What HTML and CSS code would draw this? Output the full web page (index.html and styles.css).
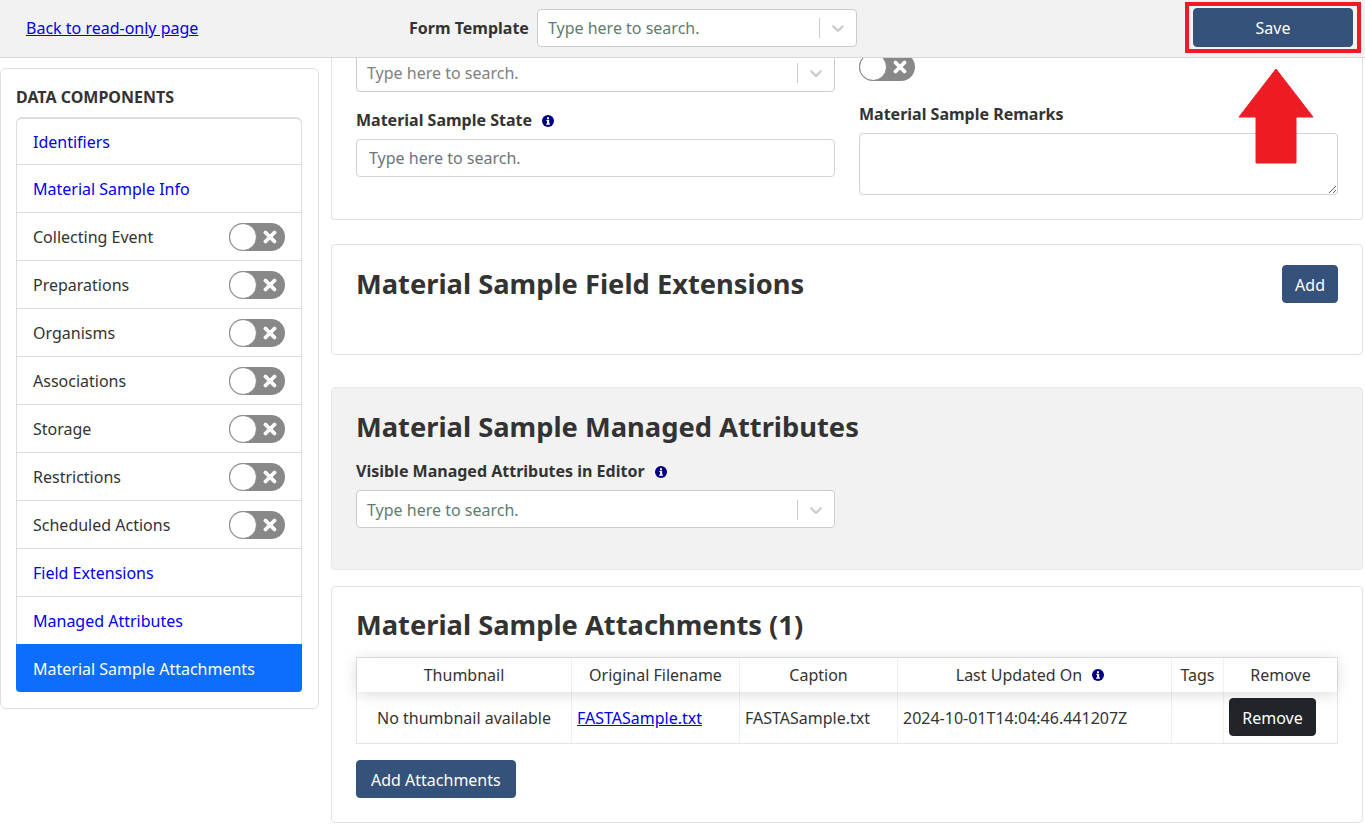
FILE: index.html
```html
<!DOCTYPE html>
<html lang="en">
<head>
    <meta charset="UTF-8">
    <meta name="viewport" content="width=device-width, initial-scale=1.0">
    <title>Edit Material Sample</title>
    <link rel="stylesheet" href="styles.css">
</head>
<body>
    <svg class="icon-defs" width="0" height="0">
        <symbol id="chevron" viewBox="0 0 20 20"><path d="M4.516 7.548c0.436-0.446 1.043-0.481 1.576 0l3.908 3.747 3.908-3.747c0.533-0.481 1.141-0.446 1.574 0 0.436 0.445 0.408 1.197 0 1.615-0.406 0.418-4.695 4.502-4.695 4.502-0.217 0.223-0.502 0.335-0.787 0.335s-0.57-0.112-0.789-0.335c0 0-4.287-4.084-4.695-4.502s-0.436-1.17 0-1.615z"/></symbol>
        <symbol id="info" viewBox="0 0 12 12"><circle cx="6" cy="6" r="6" fill="#000080"/><path fill="#fff" d="M5 2.200h2v1.700H5zM4.400 4.800h2.800v3.600h.7v1.300H4.200V8.400h.9V6.100h-.7z"/></symbol>
        <symbol id="cross" viewBox="0 0 14 14"><path d="M2.500 2.500l9 9M11.500 2.500l-9 9" stroke="#fff" stroke-width="3.800" stroke-linecap="round" fill="none"/></symbol>
    </svg>

    <header class="topbar">
        <a class="back-link" href="#">Back to read-only page</a>
        <div class="template-group">
            <label class="field-label">Form Template</label>
            <div class="select select-header">
                <span class="select-text">Type here to search.</span>
                <span class="select-sep"></span>
                <svg class="select-arrow"><use href="#chevron"/></svg>
            </div>
        </div>
        <button class="btn btn-save" type="button">Save</button>
    </header>

    <div class="layout">
        <aside class="sidebar">
            <h2 class="sidebar-title">DATA COMPONENTS</h2>
            <ul class="nav-list">
                <li class="nav-item"><a href="#">Identifiers</a></li>
                <li class="nav-item"><a href="#">Material Sample Info</a></li>
                <li class="nav-item"><span>Collecting Event</span><span class="toggle"><span class="knob"></span><svg class="cross"><use href="#cross"/></svg></span></li>
                <li class="nav-item"><span>Preparations</span><span class="toggle"><span class="knob"></span><svg class="cross"><use href="#cross"/></svg></span></li>
                <li class="nav-item"><span>Organisms</span><span class="toggle"><span class="knob"></span><svg class="cross"><use href="#cross"/></svg></span></li>
                <li class="nav-item"><span>Associations</span><span class="toggle"><span class="knob"></span><svg class="cross"><use href="#cross"/></svg></span></li>
                <li class="nav-item"><span>Storage</span><span class="toggle"><span class="knob"></span><svg class="cross"><use href="#cross"/></svg></span></li>
                <li class="nav-item"><span>Restrictions</span><span class="toggle"><span class="knob"></span><svg class="cross"><use href="#cross"/></svg></span></li>
                <li class="nav-item"><span>Scheduled Actions</span><span class="toggle"><span class="knob"></span><svg class="cross"><use href="#cross"/></svg></span></li>
                <li class="nav-item"><a href="#">Field Extensions</a></li>
                <li class="nav-item"><a href="#">Managed Attributes</a></li>
                <li class="nav-item active"><a href="#">Material Sample Attachments</a></li>
            </ul>
        </aside>

        <main class="content">
            <section class="card card-info">
                <div class="two-col">
                    <div class="col">
                        <div class="select">
                            <span class="select-text">Type here to search.</span>
                            <span class="select-sep"></span>
                            <svg class="select-arrow"><use href="#chevron"/></svg>
                        </div>
                        <label class="field-label state-label">Material Sample State <svg class="info"><use href="#info"/></svg></label>
                        <input class="text-input" type="text" placeholder="Type here to search.">
                    </div>
                    <div class="col">
                        <span class="toggle"><span class="knob"></span><svg class="cross"><use href="#cross"/></svg></span>
                        <label class="field-label remarks-label">Material Sample Remarks</label>
                        <textarea class="text-area"></textarea>
                    </div>
                </div>
            </section>

            <section class="card card-ext">
                <h3 class="card-title">Material Sample Field Extensions</h3>
                <button class="btn btn-add" type="button">Add</button>
            </section>

            <section class="card card-attrs">
                <h3 class="card-title">Material Sample Managed Attributes</h3>
                <label class="field-label attrs-label">Visible Managed Attributes in Editor <svg class="info"><use href="#info"/></svg></label>
                <div class="select select-half">
                    <span class="select-text">Type here to search.</span>
                    <span class="select-sep"></span>
                    <svg class="select-arrow"><use href="#chevron"/></svg>
                </div>
            </section>

            <section class="card card-attach">
                <h3 class="card-title">Material Sample Attachments (1)</h3>
                <div class="grid-table">
                    <div class="grid-row grid-head">
                        <div class="cell center">Thumbnail</div>
                        <div class="cell center">Original Filename</div>
                        <div class="cell center">Caption</div>
                        <div class="cell center">Last Updated On <svg class="info info-th"><use href="#info"/></svg></div>
                        <div class="cell center">Tags</div>
                        <div class="cell center">Remove</div>
                    </div>
                    <div class="grid-row grid-body">
                        <div class="cell center">No thumbnail available</div>
                        <div class="cell"><a href="#">FASTASample.txt</a></div>
                        <div class="cell">FASTASample.txt</div>
                        <div class="cell">2024-10-01T14:04:46.441207Z</div>
                        <div class="cell"></div>
                        <div class="cell"><button class="btn btn-dark" type="button">Remove</button></div>
                    </div>
                </div>
                <button class="btn btn-attach" type="button">Add Attachments</button>
            </section>
        </main>
    </div>

    <!-- annotation drawn over the screenshot -->
    <div class="callout-box"></div>
    <svg class="callout-arrow" width="76" height="97" viewBox="0 0 76 97">
        <path fill="#ed1c24" d="M38 1L75 49H58V95H18V49H1z" stroke="#ed1c24" stroke-width="1" stroke-linejoin="round"/>
    </svg>
</body>
</html>
```

FILE: styles.css
```css
* {
    box-sizing: border-box;
}
html, body {
    height: 100%;
}
body {
    margin: 0;
    height: 824px;
    overflow: hidden;
    font-family: "Noto Sans", sans-serif;
    font-size: 16px;
    line-height: 24px;
    color: #333;
    background: #fff;
}
a {
    color: #0000ee;
}
.icon-defs {
    position: absolute;
}

/* top bar */
.topbar {
    position: relative;
    z-index: 2;
    display: flex;
    align-items: center;
    height: 58px;
    padding-left: 26px;
    padding-right: 12px;
    padding-bottom: 1px;
    background: #f2f2f2;
    border-bottom: 1px solid #d8d8d8;
}
.back-link {
    width: 383px;
}
.template-group {
    display: flex;
    align-items: center;
    gap: 8px;
}
.field-label {
    display: block;
    font-weight: 700;
}
.btn {
    display: inline-block;
    height: 38px;
    padding: 2px 15px 0;
    font-family: inherit;
    font-size: 16px;
    color: #fff;
    background: #34527a;
    border: 1px solid #34527a;
    border-radius: 4px;
}
.btn-save {
    width: 160px;
    height: 39px;
    margin-top: -1px;
    margin-left: auto;
    padding-top: 1px;
}
.btn-add {
    padding-left: 12px;
    padding-right: 12px;
}

/* search selects */
.select {
    display: flex;
    align-items: center;
    width: 100%;
    height: 38px;
    padding-left: 10px;
    background: #fff;
    border: 1px solid #ccc;
    border-radius: 4px;
}
.select-header {
    width: 320px;
}
.select-text {
    flex: 1;
    color: #808080;
}
.select-header .select-text,
.select-half .select-text {
    color: #5f7d6f;
}
.select-sep {
    width: 1px;
    height: 20px;
    background: #ccc;
}
.select-arrow {
    width: 20px;
    height: 20px;
    margin: 0 8px;
    fill: #ccc;
}
.select-half {
    width: 479px;
    padding-top: 1px;
}

/* layout */
.layout {
    display: flex;
    height: 766px;
}
.sidebar {
    flex: none;
    width: 319px;
    height: 641px;
    margin-top: 10px;
    padding: 16px 16px 16px 15px;
    border: 1px solid #e0e0e0;
    border-radius: 6px;
}
.sidebar-title {
    margin: 0 0 8px;
    font-size: 16px;
    line-height: 24px;
    font-weight: 700;
}
.nav-list {
    margin: 0;
    padding: 0;
    list-style: none;
    border: 1px solid #ddd;
    border-top-width: 2px;
    border-radius: 6px;
}
.nav-item {
    display: flex;
    align-items: center;
    justify-content: space-between;
    height: 48px;
    padding: 0 16px;
    border-bottom: 1px solid #ddd;
}
.nav-item:first-child {
    height: 46px;
}
.nav-item a {
    text-decoration: none;
}
.nav-item.active {
    margin: -1px -1px -1px;
    padding: 2px 17px 0;
    background: #0d6efd;
    border-bottom: 0;
    border-radius: 0 0 4px 4px;
}
.nav-item.active a {
    color: #fff;
}

/* toggles */
.toggle {
    position: relative;
    display: block;
    flex: none;
    width: 56px;
    height: 28px;
    background: #888;
    border-radius: 14px;
}
.knob {
    position: absolute;
    left: 0;
    top: 0;
    width: 28px;
    height: 28px;
    background: #fff;
    border: 1px solid #888;
    border-radius: 50%;
}
.cross {
    position: absolute;
    left: 34px;
    top: 7px;
    width: 14px;
    height: 14px;
}

/* main cards */
.content {
    flex: none;
    width: 1032px;
    margin-left: 12px;
    overflow: hidden;
}
.card {
    padding: 0 24px;
    border: 1px solid #dee2e6;
    border-radius: 4px;
}
.card-title {
    margin: 0;
    font-size: 27.3px;
    line-height: 34px;
    font-weight: 700;
}
.card-info {
    height: 166px;
    margin-top: -4px;
    margin-bottom: 24px;
    border-top: 0;
}
.two-col {
    display: grid;
    grid-template-columns: 479px 479px;
    gap: 24px;
}
.col {
    min-width: 0;
}
.state-label {
    margin-top: 16px;
    margin-bottom: 7px;
}
.remarks-label {
    margin-top: 21px;
    margin-bottom: 7px;
}
.col .toggle {
    margin-top: -1px;
}
.text-input {
    display: block;
    width: 100%;
    height: 38px;
    padding: 0 12px;
    font-family: inherit;
    font-size: 16px;
    border: 1px solid #ced4da;
    border-radius: 4px;
}
.text-input::placeholder {
    color: #6c757d;
}
.text-area {
    display: block;
    width: 100%;
    height: 62px;
    border: 1px solid #ced4da;
    border-radius: 4px;
}
.info {
    width: 12px;
    height: 12px;
    margin-left: 6px;
    vertical-align: -1px;
}
.card-ext {
    display: flex;
    justify-content: space-between;
    align-items: flex-start;
    height: 111px;
    padding-top: 20px;
    margin-bottom: 32px;
}
.card-ext .card-title {
    margin-top: 2px;
}
.card-attrs {
    height: 183px;
    padding-top: 22px;
    margin-bottom: 16px;
    background: #f2f2f2;
    border-color: #e8e8e8;
}
.attrs-label {
    margin-top: 15px;
    margin-bottom: 7px;
}
.card-attach {
    height: 237px;
    padding-top: 21px;
}

/* attachments table */
.grid-table {
    margin-top: 15px;
    border: 1px solid #e4e4e4;
}
.grid-row {
    display: grid;
    grid-template-columns: 215px 168px 158px 274px 52px 113px;
}
.grid-head {
    position: relative;
    height: 34px;
    background: #fff;
    box-shadow: 0 2px 15px 0 rgba(0, 0, 0, .15);
}
.grid-body {
    height: 51px;
}
.cell {
    display: flex;
    align-items: center;
    padding: 0 5px;
    white-space: nowrap;
    border-right: 1px solid #f0f0f0;
}
.cell:last-child {
    border-right: 0;
}
.center {
    justify-content: center;
}
.info-th {
    margin-left: 10px;
    margin-right: 9px;
}
.btn-dark {
    width: 87px;
    padding: 2px 0 0;
    margin-bottom: 1px;
    background: #212529;
    border-color: #212529;
}
.btn-attach {
    display: block;
    padding-left: 14px;
    padding-right: 14px;
    margin-top: 16px;
}

/* red annotation */
.callout-box {
    position: absolute;
    left: 1185px;
    top: 2px;
    z-index: 3;
    width: 176px;
    height: 51px;
    border: 4px solid #ed1c24;
}
.callout-arrow {
    position: absolute;
    left: 1238px;
    top: 68px;
    z-index: 3;
}
```
